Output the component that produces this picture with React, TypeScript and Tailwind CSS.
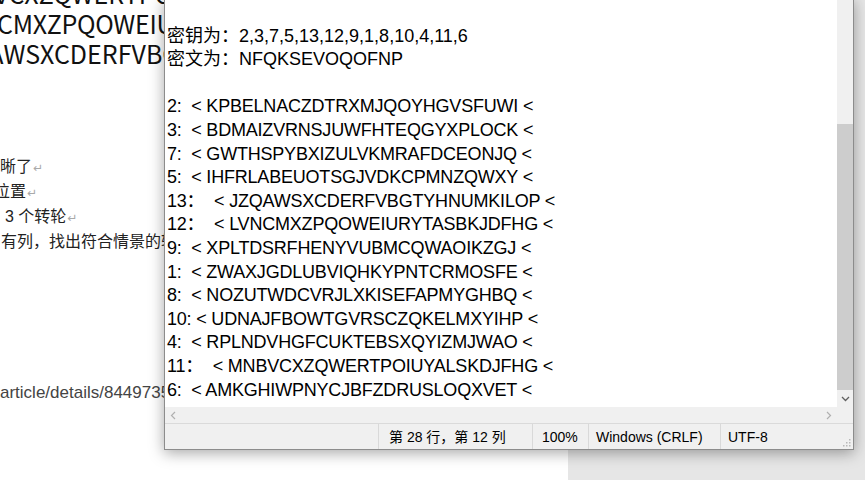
import React from "react";

const lines = [
  "",
  "密钥为：2,3,7,5,13,12,9,1,8,10,4,11,6",
  "密文为：NFQKSEVOQOFNP",
  "",
  "2:  < KPBELNACZDTRXMJQOYHGVSFUWI <",
  "3:  < BDMAIZVRNSJUWFHTEQGYXPLOCK <",
  "7:  < GWTHSPYBXIZULVKMRAFDCEONJQ <",
  "5:  < IHFRLABEUOTSGJVDKCPMNZQWXY <",
  "13：  < JZQAWSXCDERFVBGTYHNUMKILOP <",
  "12：  < LVNCMXZPQOWEIURYTASBKJDFHG <",
  "9:  < XPLTDSRFHENYVUBMCQWAOIKZGJ <",
  "1:  < ZWAXJGDLUBVIQHKYPNTCRMOSFE <",
  "8:  < NOZUTWDCVRJLXKISEFAPMYGHBQ <",
  "10: < UDNAJFBOWTGVRSCZQKELMXYIHP <",
  "4:  < RPLNDVHGFCUKTEBSXQYIZMJWAO <",
  "11：  < MNBVCXZQWERTPOIUYALSKDJFHG <",
  "6:  < AMKGHIWPNYCJBFZDRUSLOQXVET <",
];

const sans = "font-['Liberation_Sans','Noto_Sans_CJK_SC',sans-serif]";

function Ret() {
  return <span className="text-[#a9a9a9] text-[12px] font-['DejaVu_Sans',sans-serif] ml-[1px]">↵</span>;
}

export default function App() {
  return (
    <div className="relative w-[865px] h-[480px] overflow-hidden bg-[#e6e6e6]">
      {/* Word document page behind */}
      <div className="w-[568px] h-full bg-white overflow-hidden">
        <div className="-mt-[22px] font-['Noto_Sans_CJK_SC','Liberation_Sans',sans-serif] text-[25px] leading-[30px] text-[#111] whitespace-nowrap">
          <div className="-ml-[40px]">NBVCXZQWERTPOIUYALSKDJFHG</div>
          <div className="-ml-[46px] tracking-[-0.3px]">LVNCMXZPQOWEIURYTASBKJDFHG</div>
          <div className="-ml-[58px]">JZQAWSXCDERFVBGTYHNUMKILOP</div>
        </div>
        <div className={`mt-[87px] ${sans} text-[16px] leading-[24px] text-[#222] whitespace-nowrap`}>
          <div className="-ml-[16px]">清晰了<Ret /></div>
          <div className="-ml-[22px]">的位置<Ret /></div>
          <div className="ml-[5px]">3 个转轮<Ret /></div>
          <div className="ml-[1px]">有列，找出符合情景的转轮顺序</div>
        </div>
        <div className={`mt-[127px] ${sans} text-[17px] leading-[24px] text-[#444] whitespace-nowrap`}>
          article/details/84497357
        </div>
      </div>

      {/* Notepad window */}
      <div className="absolute left-[164px] top-[-2px] w-[690px] h-[452px] flex flex-col bg-[#f0f0f0] border border-[#8c8c8c] shadow-[0_3px_14px_rgba(0,0,0,0.35)]">
        <div className="flex flex-1 min-h-0">
          <div className={`flex-1 bg-white pl-[2px] pt-[2px] ${sans} text-[18px] leading-[23.6px] text-black whitespace-pre overflow-hidden`}>
            {lines.map((l, i) => (
              <div key={i} className={i >= 4 ? "h-[23.6px] tracking-[-0.2px]" : "h-[23.6px]"}>{l}</div>
            ))}
          </div>
          <div className="w-[16px] flex flex-col bg-[#f0f0f0]">
            <div className="h-[125px]" />
            <div className="flex-1 bg-[#cdcdcd]" />
            <div className="h-[17px] flex items-center justify-center">
              <svg width="9" height="6" viewBox="0 0 9 6">
                <path d="M1 1 L4.5 4.5 L8 1" fill="none" stroke="#606060" strokeWidth="1.3" />
              </svg>
            </div>
          </div>
        </div>
        <div className="h-[16px] flex items-center bg-[#f0f0f0]">
          <div className="w-[16px] flex items-center justify-center">
            <svg width="6" height="9" viewBox="0 0 6 9">
              <path d="M5 1 L1.5 4.5 L5 8" fill="none" stroke="#b0b0b0" strokeWidth="1.2" />
            </svg>
          </div>
          <div className="flex-1" />
          <div className="w-[16px] flex items-center justify-center">
            <svg width="6" height="9" viewBox="0 0 6 9">
              <path d="M1 1 L4.5 4.5 L1 8" fill="none" stroke="#b0b0b0" strokeWidth="1.2" />
            </svg>
          </div>
          <div className="w-[16px]" />
        </div>
        <div className={`relative h-[26px] flex items-stretch border-t border-[#dadada] bg-[#f0f0f0] ${sans} text-[14px] text-black`}>
          <div className="w-[214px] border-r border-[#d9d9d9]" />
          <div className="w-[154px] border-r border-[#d9d9d9] flex items-center pl-[10px] pt-[2px]">第 28 行，第 12 列</div>
          <div className="w-[56px] border-r border-[#d9d9d9] flex items-center pl-[9px] pt-[2px]">100%</div>
          <div className="w-[132px] border-r border-[#d9d9d9] flex items-center pl-[7px] pt-[2px]">Windows (CRLF)</div>
          <div className="flex-1 flex items-center pl-[7px] pt-[2px]">UTF-8</div>
          <svg className="absolute right-[2px] bottom-[2px]" width="10" height="10" viewBox="0 0 10 10">
            <rect x="8" y="2" width="1.5" height="1.5" fill="#b8b8b8" />
            <rect x="5" y="5" width="1.5" height="1.5" fill="#b8b8b8" />
            <rect x="8" y="5" width="1.5" height="1.5" fill="#b8b8b8" />
            <rect x="2" y="8" width="1.5" height="1.5" fill="#b8b8b8" />
            <rect x="5" y="8" width="1.5" height="1.5" fill="#b8b8b8" />
            <rect x="8" y="8" width="1.5" height="1.5" fill="#b8b8b8" />
          </svg>
        </div>
      </div>
    </div>
  );
}
